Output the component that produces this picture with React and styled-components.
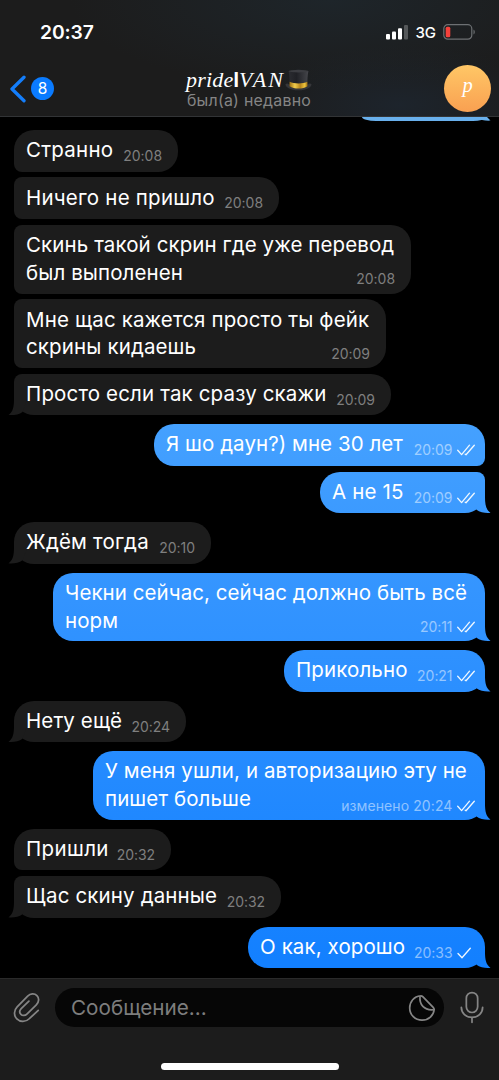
import styled, { createGlobalStyle, css } from 'styled-components';

const GlobalStyle = createGlobalStyle`
  * {
    box-sizing: border-box;
  }
  body {
    margin: 0;
    background: #000;
    font-family: Inter, "Liberation Sans", sans-serif;
  }
  svg {
    flex: none;
  }
`;

const Screen = styled.div`
  width: 499px;
  height: 1080px;
  overflow: hidden;
  display: flex;
  flex-direction: column;
  background: #000;
`;

const Header = styled.header`
  height: 117px;
  flex: none;
  padding-top: 18px;
  color: #fff;
  border-bottom: 1px solid #323436;
  background:
    radial-gradient(ellipse 260px 90px at 330px 0, #1e252a, transparent),
    radial-gradient(ellipse 150px 60px at 400px 105px, #1d242c, transparent),
    #1c1c1c;
`;

const StatusBar = styled.div`
  height: 28px;
  padding: 0 24px 0 40px;
  display: flex;
  align-items: center;
  justify-content: space-between;
`;

const Clock = styled.span`
  font-size: 19.3px;
  font-weight: 600;
  letter-spacing: -0.1px;
`;

const StatusIcons = styled.div`
  display: flex;
  align-items: center;
  gap: 7px;
`;

const Network = styled.span`
  font-size: 15px;
  font-weight: 500;
`;

const NavBar = styled.div`
  height: 70px;
  padding: 0 8px 0 10px;
  display: grid;
  grid-template-columns: 80px 1fr 80px;
  align-items: center;
`;

const Back = styled.div`
  display: flex;
  align-items: center;
  gap: 4px;
  padding-top: 15px;
`;

const Badge = styled.span`
  width: 23px;
  height: 23px;
  border-radius: 50%;
  background: #0a7bff;
  font-size: 15.5px;
  line-height: 23px;
  text-align: center;
`;

const Title = styled.div`
  display: flex;
  flex-direction: column;
  align-items: center;
  padding: 17px 3px 0 0;
`;

const Name = styled.div`
  display: flex;
  align-items: center;
  height: 23px;
  font-family: "Liberation Serif", serif;
  font-style: italic;
  font-size: 22px;
  letter-spacing: 0.2px;
  white-space: nowrap;

  b {
    font: 700 20px Inter, sans-serif;
    letter-spacing: 0;
  }
`;

const Caps = styled.span`
  letter-spacing: 2px;
`;

const Status = styled.div`
  font-size: 15.9px;
  line-height: 20px;
  color: #858585;
  letter-spacing: 0.25px;
`;

const Avatar = styled.div`
  width: 47px;
  height: 47px;
  margin-top: 15px;
  justify-self: end;
  border-radius: 50%;
  background: linear-gradient(#ffc766, #f9a051);
  font: italic 20.5px/41px "Liberation Serif", serif;
  text-align: center;
`;

const Chat = styled.main`
  flex: 1;
  min-height: 0;
  padding: 0 14px;
  display: flex;
  flex-direction: column;
  background: #000;
`;

const outgoing = css`
  background: linear-gradient(#69b0ec 117px, #45a1ff 420px, #3394ff 600px, #1380ff 960px) fixed;
`;

const Bubble = styled.div`
  position: relative;
  isolation: isolate;
  flex: none;
  display: flex;
  flex-direction: column;
  align-self: ${(p) => (p.$out ? 'flex-end' : 'flex-start')};
  width: ${(p) => p.$w}px;
  height: ${(p) => (p.$tall ? 68.8 : 41.7)}px;
  margin-top: ${(p) => (p.$first ? 8.8 : 5.7)}px;
  padding: 6.3px ${(p) => (p.$out ? 10 : 16)}px 0 12px;
  border-radius: ${(p) => {
    const top = p.$first ? 20 : 8;
    const bottom = p.$tail ? 20 : 8;
    return p.$out ? `20px ${top}px ${bottom}px 20px` : `${top}px 20px 20px ${bottom}px`;
  }};
  color: #fff;
  ${(p) => (p.$out ? outgoing : 'background: #1c1c1c;')}

  /* tail, kept under the ticks */
  &::after {
    content: '';
    display: ${(p) => (p.$tail ? 'block' : 'none')};
    position: absolute;
    z-index: -1;
    bottom: 0;
    ${(p) => (p.$out ? 'right: -6px;' : 'left: -6px; transform: scaleX(-1);')}
    width: 21px;
    height: 21px;
    clip-path: path('M15 0 L15 5 C15 12 16 17.5 20.5 20.6 C16 21.3 10 20 6.5 17.5 L0 0 Z');
    ${(p) => (p.$out ? outgoing : 'background: #1c1c1c;')}
  }
`;

const PrevBubble = styled.div`
  position: relative;
  flex: none;
  align-self: flex-end;
  width: 123px;
  height: 4px;
  margin-bottom: 0.2px;
  border-radius: 0 0 12px 14px / 0 0 3px 4px;
  ${outgoing}

  &::after {
    content: '';
    position: absolute;
    right: -6px;
    bottom: 0;
    width: 21px;
    height: 4px;
    clip-path: path('M0 0 H17 L20.5 3.6 C16 4 10 3 6.5 0.8 Z');
    ${outgoing}
  }
`;

const LastLine = styled.div`
  flex: 1;
  display: flex;
  justify-content: space-between;
  align-items: flex-end;
`;

const Text = styled.p`
  align-self: flex-start;
  margin: 0;
  font-size: 20.5px;
  line-height: 27.9px;
  letter-spacing: ${(p) => p.$ls}px;
  white-space: nowrap;
`;

const Meta = styled.span`
  display: flex;
  align-items: center;
  flex: none;
  gap: 4.5px;
  padding-bottom: ${(p) => (p.$tall ? 4.2 : 5.6)}px;
  font-size: 14px;
  line-height: 20px;
  letter-spacing: ${(p) => (p.$edited ? 0.1 : -0.05)}px;
  color: ${(p) => (p.$out ? 'rgba(255, 255, 255, 0.5)' : '#7f7f7f')};
`;

const Footer = styled.footer`
  height: 102px;
  flex: none;
  display: flex;
  flex-direction: column;
  align-items: center;
  justify-content: space-between;
  padding: 9px 15px 10px 13px;
  background: #1c1c1c;
  border-top: 1px solid #2a2a2a;
`;

const Composer = styled.div`
  width: 100%;
  display: flex;
  align-items: center;
  justify-content: space-between;
`;

const Field = styled.div`
  width: 389px;
  height: 39px;
  margin-right: 1px;
  padding: 0 8px 0 16px;
  display: flex;
  align-items: center;
  justify-content: space-between;
  border-radius: 20px;
  background: #060606;
  color: #7d7d7d;
  font-size: 20.7px;
`;

const HomeBar = styled.div`
  width: 178px;
  height: 7px;
  margin-left: 2px;
  border-radius: 4px;
  background: #fff;
`;

const Signal = () => (
  <svg width="22" height="16" viewBox="0 0 22 16" fill="#fff">
    <rect x="0" y="10" width="4" height="5.5" rx="1" />
    <rect x="6" y="7.5" width="4" height="8" rx="1" />
    <rect x="12" y="4.3" width="4" height="11.2" rx="1" />
    <rect x="18" y="1" width="4" height="14.5" rx="1" fill="#55585a" />
  </svg>
);

const Battery = () => (
  <svg width="32" height="16" viewBox="0 0 32 16" fill="none">
    <rect x="0.8" y="0.7" width="28" height="14.5" rx="4" stroke="#6d7073" strokeWidth="1.2" />
    <rect x="2.7" y="2.8" width="4.6" height="10.4" rx="1.5" fill="#f5413b" />
    <path d="M30.5 5.5 C32.2 6.4 32.2 9.6 30.5 10.5 Z" fill="#6d7073" />
  </svg>
);

const Chevron = () => (
  <svg width="17" height="28" viewBox="0 0 17 28" fill="none">
    <path d="M14 2.2 L2 14 L14 25.8" stroke="#147efb" strokeWidth="3.3" strokeLinecap="round" strokeLinejoin="round" />
  </svg>
);

const Hat = () => (
  <svg width="27" height="22" viewBox="0 0 27 22">
    <defs>
      <linearGradient id="felt">
        <stop offset="0" stopColor="#2b2c31" />
        <stop offset="0.4" stopColor="#202126" />
        <stop offset="1" stopColor="#45464b" />
      </linearGradient>
      <linearGradient id="band">
        <stop offset="0" stopColor="#9c6e12" />
        <stop offset="0.3" stopColor="#f2cd4c" />
        <stop offset="0.6" stopColor="#b8851c" />
        <stop offset="0.85" stopColor="#f0c63e" />
        <stop offset="1" stopColor="#93660f" />
      </linearGradient>
    </defs>
    <path d="M0.6 15 C0 18 5 21.3 13.5 21.3 C22 21.3 27 18 26.4 15 C25 14 24 14.5 23 15.5 H4 C3 14.5 2 14 0.6 15 Z" fill="#35363a" />
    <path d="M3.6 2 H23.4 C22.5 7 22.2 11 22.5 17 C18 20.3 9 20.3 4.5 17 C4.8 11 4.5 7 3.6 2 Z" fill="url(#felt)" />
    <ellipse cx="13.5" cy="2.1" rx="10" ry="1.3" fill="#3c3d42" />
    <path d="M4.6 12.8 C9 15 18 15 22.4 12.8 L22.5 17.2 C18 20.3 9 20.3 4.5 17.2 Z" fill="url(#band)" />
  </svg>
);

const Ticks = ({ single }) => (
  <svg width="18" height="12" viewBox="0 0 18 12" fill="none" stroke="#f0f8ff" strokeWidth="1.3" strokeLinecap="round" strokeLinejoin="round">
    {single ? (
      <path d="M1 6.5 L5 10.7 L13.3 1.2" />
    ) : (
      <>
        <path d="M0.7 6.3 L4.6 10.6 L12.5 1.2" />
        <path d="M8.2 10.2 L9 10.8 L17.3 1.2" />
      </>
    )}
  </svg>
);

const Clip = () => (
  <svg width="27" height="31" viewBox="0 0 28 32" fill="none" stroke="#858585" strokeWidth="1.8" strokeLinecap="round" strokeLinejoin="round">
    <path d="M26.2 18.9 L17.2 27.4 C13.2 31.4 7.3 31.2 4 27.8 C0.6 24.4 0.8 19 4.3 15.4 L15.2 4.1 C18 1.3 22.3 1 24.8 3.6 C27.4 6.2 27 10.4 24.2 13.2 L14.4 22.8 C12.6 24.6 9.8 24.8 8.2 23.1 C6.6 21.4 6.8 18.9 8.5 17.1 L16.5 9.4" />
  </svg>
);

const Sticker = () => (
  <svg width="28" height="28" viewBox="0 0 28 28" fill="none" stroke="#858585" strokeWidth="1.7" strokeLinejoin="round">
    <path d="M12.5 1.8 C6 2.3 1.7 7.7 1.7 14 C1.7 21 7.2 26.2 14 26.2 C20.6 26.2 25.6 21.6 26.2 15.5 C26.2 14.5 25.8 14 25.2 13.3 L15 2.8 C14.2 2 13.5 1.7 12.5 1.8 Z" />
    <path d="M12 2.2 C11.3 10.5 15.8 16.7 25.8 15.7" />
  </svg>
);

const Mic = () => (
  <svg width="24" height="33" viewBox="0 0 25 34" fill="none" stroke="#858585" strokeWidth="1.8" strokeLinecap="round">
    <rect x="6.6" y="1.4" width="11.8" height="20.8" rx="5.9" />
    <path d="M1.4 16.8 C1.4 23 6.3 27.3 12.5 27.3 C18.7 27.3 23.6 23 23.6 16.8" />
    <path d="M12.5 27.5 V32.4" />
  </svg>
);

// w - bubble width, ls - letter spacing
const messages = [
  { lines: ['Странно'], time: '20:08', w: 164, ls: 0.25, first: true },
  { lines: ['Ничего не пришло'], time: '20:08', w: 265, ls: 0.22 },
  { lines: ['Скинь такой скрин где уже перевод', 'был выполенен'], time: '20:08', w: 397, ls: 0.1 },
  { lines: ['Мне щас кажется просто ты фейк', 'скрины кидаешь'], time: '20:09', w: 372, ls: 0.13 },
  { lines: ['Просто если так сразу скажи'], time: '20:09', w: 377, ls: 0.15, tail: true },
  { lines: ['Я шо даун?) мне 30 лет'], time: '20:09', w: 331, ls: 0.06, out: true, first: true },
  { lines: ['А не 15'], time: '20:09', w: 165, ls: 0.15, out: true, tail: true },
  { lines: ['Ждём тогда'], time: '20:10', w: 197, ls: 0.2, first: true, tail: true },
  { lines: ['Чекни сейчас, сейчас должно быть всё', 'норм'], time: '20:11', w: 432, ls: 0.06, out: true, first: true, tail: true },
  { lines: ['Прикольно'], time: '20:21', w: 201, ls: 0.12, out: true, first: true, tail: true },
  { lines: ['Нету ещё'], time: '20:24', w: 172, ls: 0.1, first: true, tail: true },
  { lines: ['У меня ушли, и авторизацию эту не', 'пишет больше'], time: '20:24', edited: true, w: 392, ls: 0.1, out: true, first: true, tail: true },
  { lines: ['Пришли'], time: '20:32', w: 157, ls: 0.35, first: true },
  { lines: ['Щас скину данные'], time: '20:32', w: 267, ls: 0.14, tail: true },
  { lines: ['О как, хорошо'], time: '20:33', w: 237, ls: 0.1, out: true, first: true, tail: true, single: true },
];

const Message = ({ lines, time, edited, w, ls, out, first, tail, single }) => {
  const tall = lines.length > 1;
  return (
    <Bubble $w={w} $out={out} $first={first} $tail={tail} $tall={tall}>
      {tall && <Text $ls={ls}>{lines[0]}</Text>}
      <LastLine>
        <Text $ls={ls}>{lines[lines.length - 1]}</Text>
        <Meta $out={out} $tall={tall} $edited={edited}>
          {edited ? `изменено ${time}` : time}
          {out && <Ticks single={single} />}
        </Meta>
      </LastLine>
    </Bubble>
  );
};

const App = () => {
  return (
    <Screen>
      <GlobalStyle />
      <Header>
        <StatusBar>
          <Clock>20:37</Clock>
          <StatusIcons>
            <Signal />
            <Network>3G</Network>
            <Battery />
          </StatusIcons>
        </StatusBar>
        <NavBar>
          <Back>
            <Chevron />
            <Badge>8</Badge>
          </Back>
          <Title>
            <Name>
              pride<b>l</b>
              <Caps>VAN</Caps>
              <Hat />
            </Name>
            <Status>был(а) недавно</Status>
          </Title>
          <Avatar>p</Avatar>
        </NavBar>
      </Header>
      <Chat>
        <PrevBubble />
        {messages.map((m, i) => (
          <Message key={i} {...m} />
        ))}
      </Chat>
      <Footer>
        <Composer>
          <Clip />
          <Field>
            Сообщение...
            <Sticker />
          </Field>
          <Mic />
        </Composer>
        <HomeBar />
      </Footer>
    </Screen>
  );
};

export default App;
